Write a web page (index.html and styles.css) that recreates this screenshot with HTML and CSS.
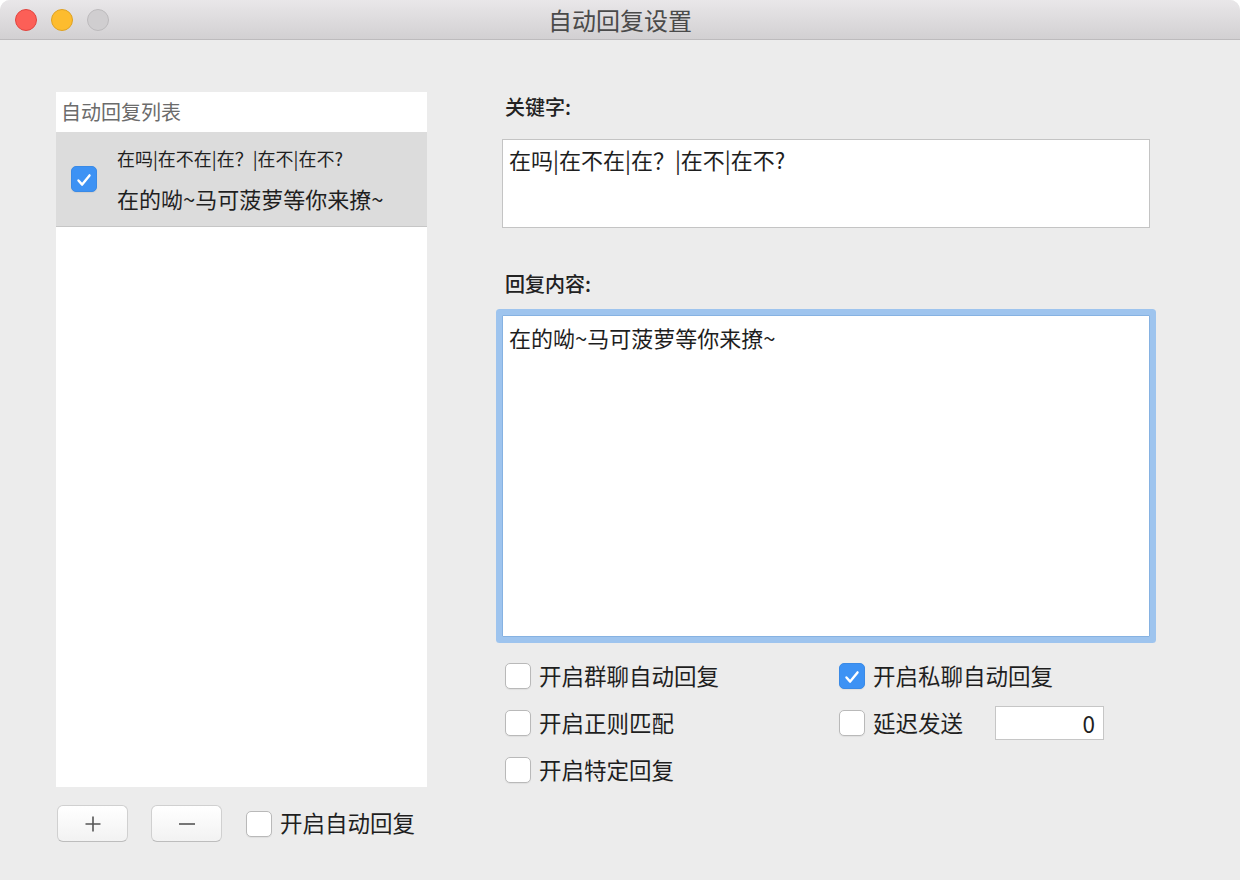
FILE: index.html
```html
<!DOCTYPE html>
<html lang="zh-CN">
<head>
  <meta charset="UTF-8">
  <title>自动回复设置</title>
  <link rel="stylesheet" href="styles.css">
</head>
<body>
  <div class="window">
    <div class="titlebar">
      <div class="lights">
        <span class="light close"></span>
        <span class="light min"></span>
        <span class="light zoom"></span>
      </div>
      <div class="title">自动回复设置</div>
      <div></div>
    </div>

    <div class="main">
      <div class="left">
        <div class="list">
          <div class="list-head">自动回复列表</div>
          <div class="row">
            <span class="check on">
              <svg viewBox="0 0 26 26" width="26" height="26"><path d="M7 13.5l4 4.5 8-10" fill="none" stroke="#fff" stroke-width="2.6" stroke-linecap="round" stroke-linejoin="round"/></svg>
            </span>
            <div class="row-text">
              <div class="row-key">在吗|在不在|在？|在不|在不?</div>
              <div class="row-reply">在的呦~马可菠萝等你来撩~</div>
            </div>
          </div>
        </div>
        <div class="bottom">
          <button class="btn">
            <svg viewBox="0 0 20 20" width="20" height="20"><path d="M10 2.5v15M2.5 10h15" stroke="#555" stroke-width="1.6"/></svg>
          </button>
          <button class="btn">
            <svg viewBox="0 0 20 20" width="20" height="20"><path d="M2 10h16" stroke="#555" stroke-width="1.6"/></svg>
          </button>
          <label class="opt bottom-opt"><span class="check"></span><span class="opt-text">开启自动回复</span></label>
        </div>
      </div>

      <div class="right">
        <div class="label">关键字:</div>
        <div class="field keyword">在吗|在不在|在？|在不|在不?</div>
        <div class="label label-gap">回复内容:</div>
        <div class="field reply">在的呦~马可菠萝等你来撩~</div>

        <div class="options">
          <label class="opt"><span class="check"></span><span class="opt-text">开启群聊自动回复</span></label>
          <label class="opt">
            <span class="check on">
              <svg viewBox="0 0 26 26" width="26" height="26"><path d="M7 13.5l4 4.5 8-10" fill="none" stroke="#fff" stroke-width="2.6" stroke-linecap="round" stroke-linejoin="round"/></svg>
            </span><span class="opt-text">开启私聊自动回复</span>
          </label>
          <label class="opt"><span class="check"></span><span class="opt-text">开启正则匹配</span></label>
          <label class="opt"><span class="check"></span><span class="opt-text">延迟发送</span><span class="delay">0</span></label>
          <label class="opt"><span class="check"></span><span class="opt-text">开启特定回复</span></label>
        </div>
      </div>
    </div>
  </div>
</body>
</html>
```

FILE: styles.css
```css
body {
  margin: 0;
  background: #fff;
  font-family: "Noto Sans CJK SC", "Noto Sans", sans-serif;
  color: #1f1f1f;
}

.window {
  width: 1240px;
  height: 880px;
  background: #ececec;
  border-radius: 10px 10px 0 0;
  overflow: hidden;
}

.titlebar {
  height: 39px;
  border-bottom: 1px solid #bdbbbd;
  background: linear-gradient(#e9e7e9, #d2d0d2);
  display: grid;
  grid-template-columns: 1fr auto 1fr;
  align-items: center;
}

.lights {
  display: flex;
  gap: 14px;
  padding-left: 15px;
}

.light {
  width: 22px;
  height: 22px;
  border-radius: 50%;
  box-sizing: border-box;
}

.close { background: #fc5f57; border: 1px solid #e0443e; }
.min { background: #fdbc2e; border: 1px solid #dea123; }
.zoom { background: #d0ced0; border: 1px solid #bcbabc; }

.title {
  font-size: 24px;
  color: #4a4a4a;
}

.main {
  display: flex;
  padding: 52px 0 0 56px;
}

.left {
  width: 371px;
}

.list {
  height: 695px;
  background: #fff;
}

.list-head {
  height: 40px;
  line-height: 40px;
  padding-left: 5px;
  font-size: 20px;
  color: #6b6b6b;
}

.row {
  height: 94px;
  background: #dcdcdc;
  border-bottom: 1px solid #c6c6c6;
  display: flex;
  align-items: center;
}

.row .check {
  margin-left: 15px;
}

.row-text {
  margin-left: 20px;
}

.row-key {
  font-size: 18px;
  line-height: 38px;
}

.row-reply {
  font-size: 22px;
  line-height: 42px;
}

.check {
  width: 26px;
  height: 26px;
  box-sizing: border-box;
  border: 1px solid #b9b9b9;
  border-radius: 5px;
  background: #fff;
  box-shadow: 0 1px 1px rgba(0, 0, 0, 0.06);
  flex: none;
  display: flex;
}

.check.on {
  background: #3d92f4;
  border-color: #3a8ae6;
}

.bottom {
  margin-top: 18px;
  display: flex;
  align-items: center;
}

.btn {
  width: 71px;
  height: 37px;
  margin: 0 22px 0 1px;
  padding: 0;
  border: 1px solid #d0d0d0;
  border-bottom-color: #bdbdbd;
  border-radius: 6px;
  background: linear-gradient(#ffffff, #f2f2f2);
  display: flex;
  align-items: center;
  justify-content: center;
}

.bottom-opt {
  margin-left: 2px;
}

.right {
  margin-left: 69px;
  width: 660px;
}

.label {
  padding-left: 9px;
  font-size: 20px;
  line-height: 30px;
  font-weight: 500;
  color: #222;
}

.label-gap {
  margin-top: 41px;
}

.field {
  margin-left: 6px;
  width: 648px;
  box-sizing: border-box;
  background: #fff;
  font-size: 22px;
  line-height: 30px;
  color: #1e1e1e;
}

.keyword {
  margin-top: 17px;
  height: 89px;
  border: 1px solid #c4c4c4;
  padding: 4px 6px;
}

.reply {
  margin-top: 16px;
  height: 322px;
  border: 1px solid #86b2e2;
  border-radius: 1px;
  box-shadow: 0 0 0 6px #9ec4ee;
  padding: 6px 6px;
}

.options {
  margin-top: 26px;
  padding-left: 9px;
  display: grid;
  grid-template-columns: 334px 1fr;
  grid-auto-rows: 26px;
  row-gap: 21px;
}

.opt {
  display: flex;
  align-items: center;
  height: 26px;
  gap: 8px;
  font-size: 22.5px;
  line-height: 26px;
  color: #1f1f1f;
}

.opt-text {
  margin-top: -3px;
}

.delay {
  margin-left: 24px;
  width: 109px;
  height: 34px;
  box-sizing: border-box;
  border: 1px solid #c6c6c6;
  background: #fff;
  text-align: right;
  padding-right: 8px;
  line-height: 32px;
  flex: none;
}
```
